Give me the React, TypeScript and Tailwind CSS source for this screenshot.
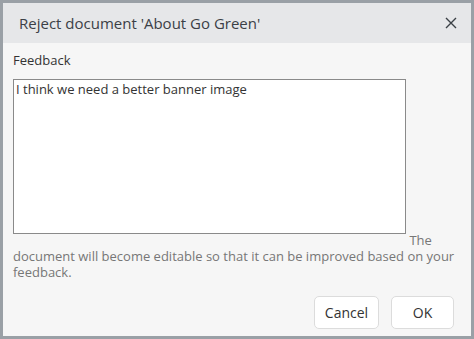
import React from "react";

export default function App() {
  return (
    <div
      className="w-[474px] h-[339px] bg-[#9aa0a6] p-[3px]"
      style={{ fontFamily: '"Open Sans", "Noto Sans", sans-serif' }}
    >
      <div className="w-full h-full flex flex-col bg-[#f6f6f6]">
        <div className="h-[40px] shrink-0 bg-[#e6e7e9] flex items-center justify-between pl-[16px] pr-[14px]">
          <span className="text-[15px] text-[#3b4046]">Reject document 'About Go Green'</span>
          <svg width="12" height="12" viewBox="0 0 12 12" className="text-[#3b4046]">
            <path d="M1 1 L11 11 M11 1 L1 11" stroke="currentColor" strokeWidth="1.4" />
          </svg>
        </div>
        <div className="flex-1 px-[10px] pt-[8px] flex flex-col">
          <div className="text-[13px] text-[#333] leading-[18px]">Feedback</div>
          <div className="mt-[10px] text-[13px] leading-[16px] text-[#777]">
            <textarea
              className="w-[393px] h-[155px] border border-[#8a8a8a] bg-white text-[13px] text-[#333] px-[2px] py-0 leading-[18px] resize-none align-[11px] outline-none"
              defaultValue="I think we need a better banner image"
            />{" "}
            The document will become editable so that it can be improved based on your feedback.
          </div>
          <div className="flex-1" />
          <div className="flex justify-end gap-[12px] pb-[7px] pr-[7px]">
            <button className="w-[65px] h-[33px] bg-white border border-[#dcdcdc] rounded-[5px] text-[14px] text-[#333]">
              Cancel
            </button>
            <button className="w-[63px] h-[33px] bg-white border border-[#dcdcdc] rounded-[5px] text-[14px] text-[#333]">
              OK
            </button>
          </div>
        </div>
      </div>
    </div>
  );
}
